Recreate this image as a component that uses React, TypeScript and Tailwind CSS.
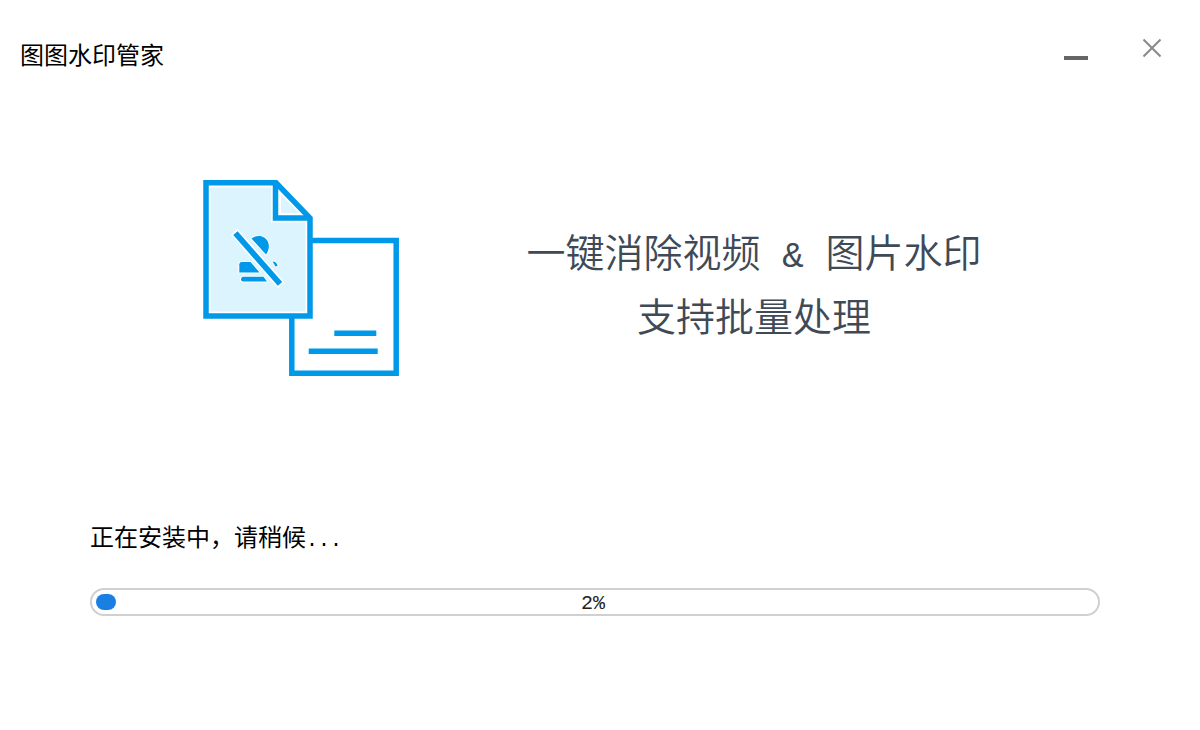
import { useState } from 'react';

const PROGRESS = 2;

function WatermarkIcon() {
  return (
    <svg viewBox="0 0 196 196" className="w-[196px] h-[196px] shrink-0" fill="none" aria-hidden="true">
      {/* Back page */}
      <path d="M88.8 60.5H193.2V193.2H88.8Z" fill="#fff" stroke="#0099e9" strokeWidth="5.5" />
      <path d="M131.3 153.2H173.3M105.7 171.2H174.7" stroke="#0099e9" strokeWidth="5.5" />

      {/* Front page */}
      <path d="M3 2.8H73L107 38V136H3Z" fill="#fff" stroke="#0099e9" strokeWidth="5.5" />
      <path d="M7.5 7.5H68V42.5H102.5V131.5H7.5Z" fill="#dbf4fe" />
      <path d="M78 14.5L96 33H78Z" fill="#dbf4fe" />
      <path d="M72.5 3V38H108" stroke="#0099e9" strokeWidth="5.5" />

      {/* Stamp */}
      <g fill="#0099e9" stroke="#fff" strokeWidth="2" paintOrder="stroke" strokeLinejoin="round">
        <path d="M48.5 58.5C52 55.5 58 54.8 62 58C67 62 67 69 63 74.5Z" />
        <path d="M36.3 84.3Q36.3 82 38.8 82H47.5L56.5 92.4H36.3Z" />
        <path d="M69.5 81.5Q74 81.5 74.5 86L72.5 86.5Z" />
        <path d="M40 96.8H60.5L64 101.6H40Q38 101.4 38 99.2Q38 97 40 96.8Z" />
      </g>
      <path d="M31.2 51.8L78.2 105.2" stroke="#fff" strokeWidth="9" />
      <path d="M32.4 53.2L77 103.9" stroke="#0099e9" strokeWidth="5.8" />
    </svg>
  );
}

function InstallProgress({ value }: { value: number }) {
  return (
    <div
      role="progressbar"
      aria-labelledby="install-status"
      aria-valuemin={0}
      aria-valuemax={100}
      aria-valuenow={value}
      className="relative h-7 rounded-full border-2 border-[#d0d0d0] p-1"
    >
      <div className="h-full rounded-full bg-[#1a7fe3]" style={{ width: `${value}%` }} />
      <span className="absolute inset-0 flex items-center justify-center pt-1 pr-1 font-['Liberation_Mono',monospace] text-xl leading-none text-[#222]">
        {value}%
      </span>
    </div>
  );
}

export default function App() {
  const [open, setOpen] = useState(true);

  if (!open) return null;

  return (
    <div className="min-h-screen bg-white font-['Noto_Sans_CJK_SC',sans-serif] text-black">
      <header className="flex items-start justify-between pl-5 pr-8 pt-9">
        <h1 className="text-2xl leading-9 font-normal">图图水印管家</h1>
        <div className="flex gap-10">
          <button type="button" aria-label="最小化" className="flex h-6 w-10 items-end justify-center">
            <span className="h-1 w-6 bg-[#666]" />
          </button>
          <button type="button" aria-label="关闭" className="flex h-6 w-8 items-center justify-center" onClick={() => setOpen(false)}>
            <svg viewBox="0 0 18 18" className="w-[18px] h-[18px]" fill="none" stroke="#888" strokeWidth="2">
              <path d="M0.5 0.5L17.5 17.5M17.5 0.5L0.5 17.5" />
            </svg>
          </button>
        </div>
      </header>

      <main>
        <section className="flex items-center justify-center gap-32 pt-27 pr-4">
          <WatermarkIcon />
          <p className="pt-2 text-center text-[39px] leading-16 font-[350] text-[#3f4a56]">
            一键消除视频
            <span className="font-['Liberation_Mono',monospace] text-4xl leading-none whitespace-pre"> &amp; </span>
            图片水印
            <br />
            支持批量处理
          </p>
        </section>

        <section className="pt-[142px] pr-[100px] pl-[90px]">
          <p id="install-status" className="mb-[34px] text-2xl leading-9">
            正在安装中，请稍候<span className="font-['Liberation_Mono',monospace] text-xl leading-none">...</span>
          </p>
          <InstallProgress value={PROGRESS} />
        </section>
      </main>
    </div>
  );
}
